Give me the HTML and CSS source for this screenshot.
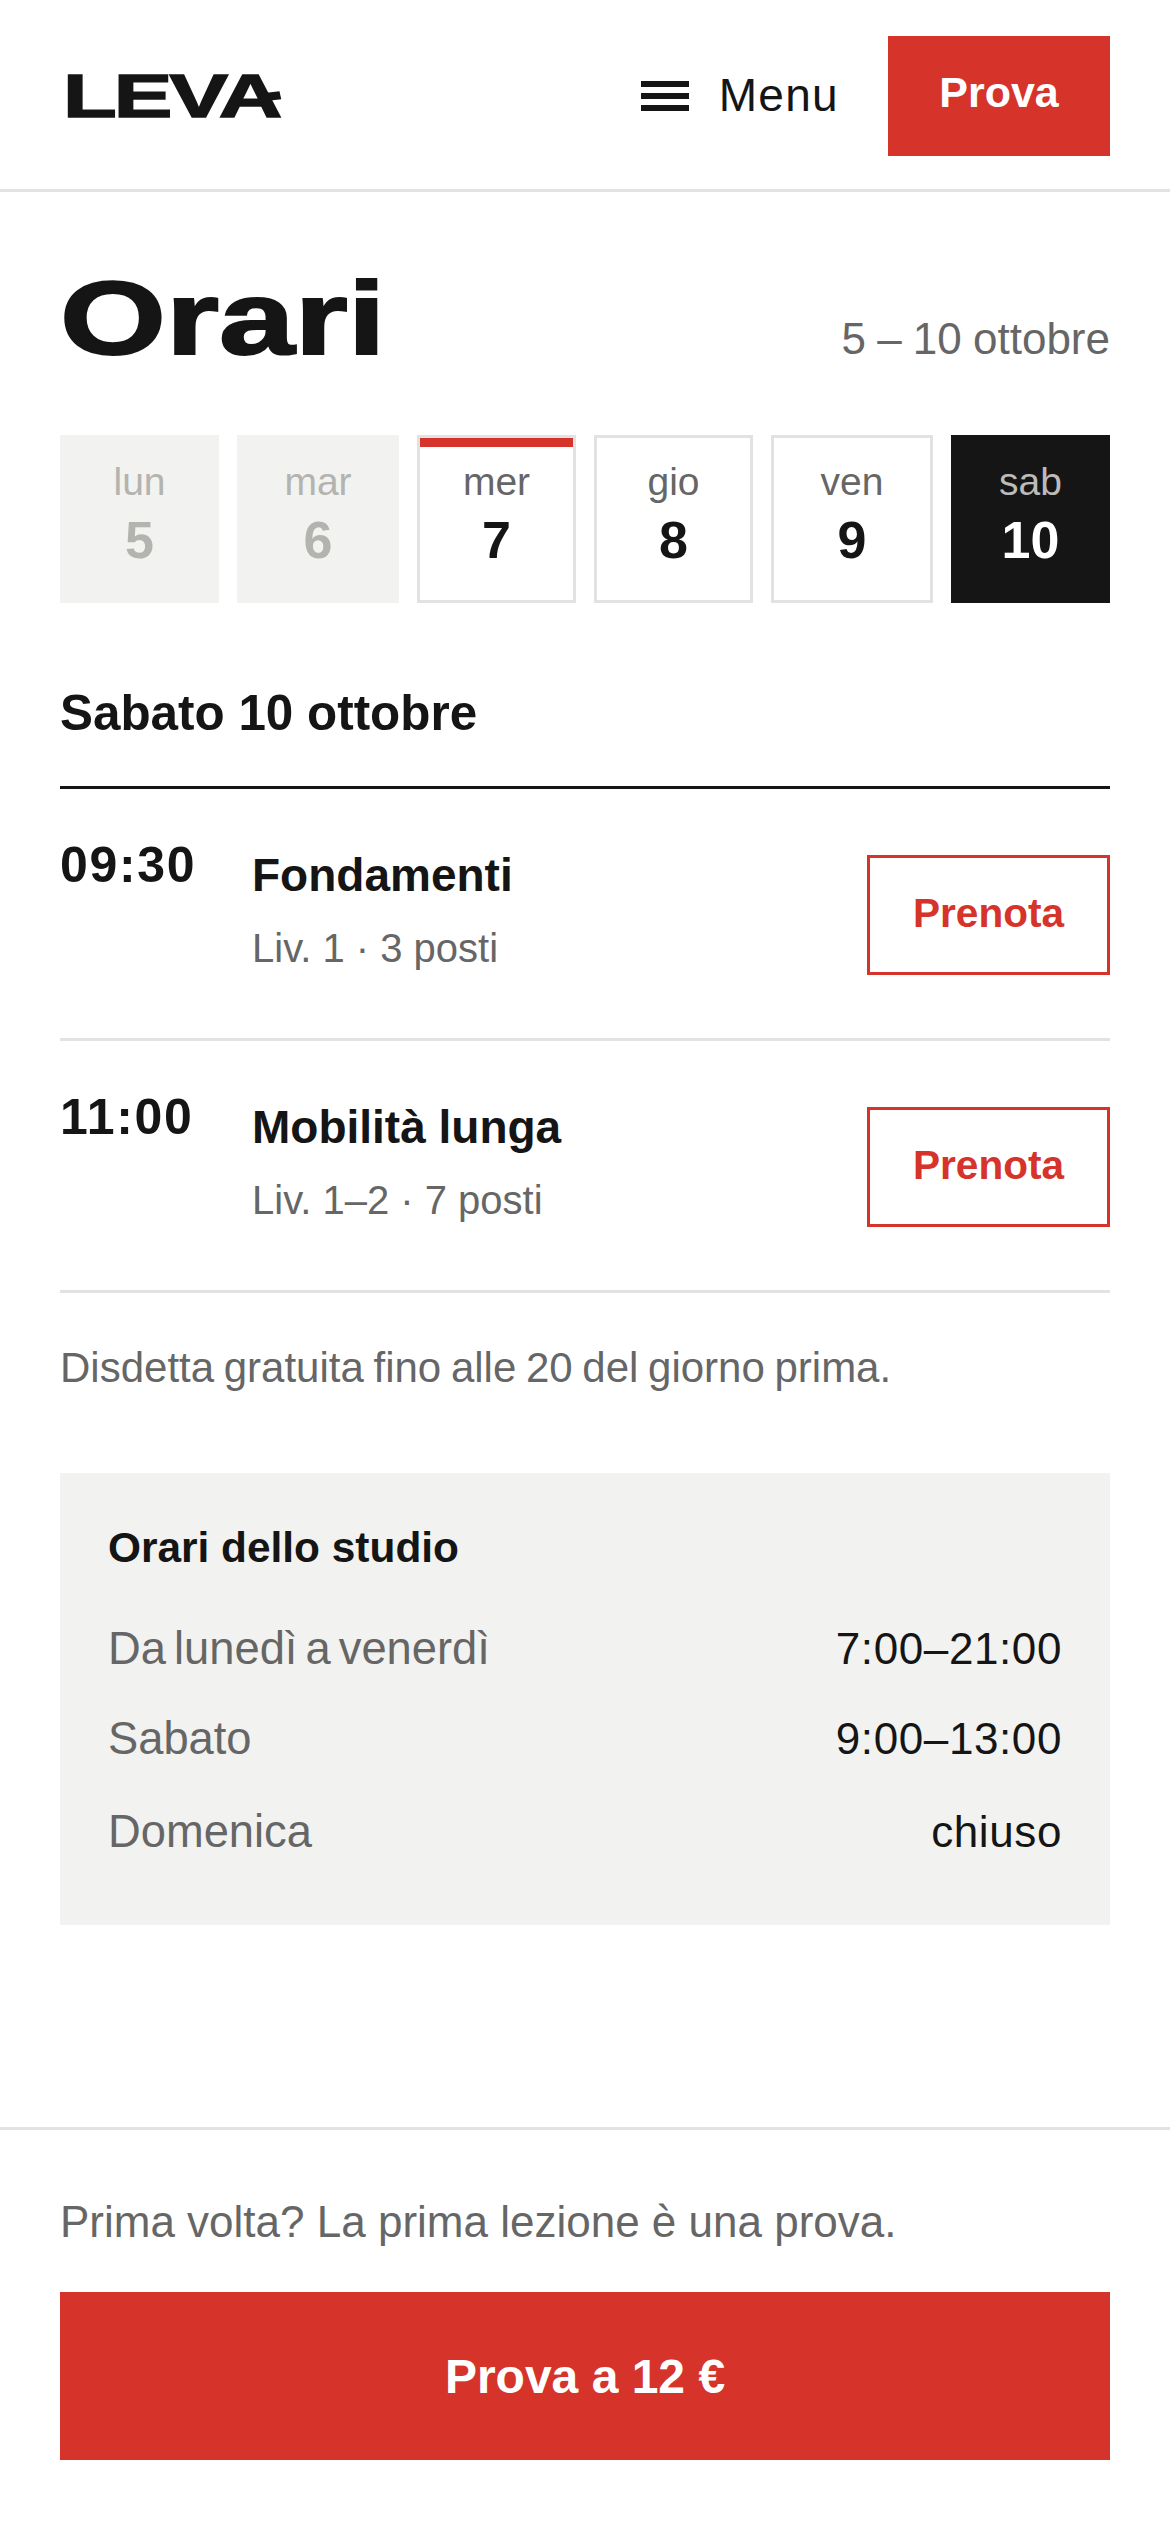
FILE: index.html
```html
<!DOCTYPE html>
<html>
<head>
    <title>Orari</title>
    <link rel="stylesheet" href="styles.css">
</head>
<body>
    <header class="topbar">
        <div class="logo">LEVA</div>
        <div class="menu">
            <svg class="menu-icon" width="48" height="30" viewBox="0 0 48 30">
                <rect x="0" y="0" width="48" height="6" fill="#151515"/>
                <rect x="0" y="12" width="48" height="6" fill="#151515"/>
                <rect x="0" y="24" width="48" height="6" fill="#151515"/>
            </svg>
            <span class="menu-label">Menu</span>
        </div>
        <div class="top-cta">Prova</div>
    </header>

    <main class="content">
        <div class="title-row">
            <h1>Orari</h1>
            <div class="range">5 – 10 ottobre</div>
        </div>

        <div class="days">
            <div class="day past"><span class="name">lun</span><span class="num">5</span></div>
            <div class="day past"><span class="name">mar</span><span class="num">6</span></div>
            <div class="day today"><span class="name">mer</span><span class="num">7</span></div>
            <div class="day"><span class="name">gio</span><span class="num">8</span></div>
            <div class="day"><span class="name">ven</span><span class="num">9</span></div>
            <div class="day selected"><span class="name">sab</span><span class="num">10</span></div>
        </div>

        <h2>Sabato 10 ottobre</h2>

        <div class="lesson">
            <div class="time">09:30</div>
            <div class="info">
                <div class="lesson-name">Fondamenti</div>
                <div class="lesson-meta">Liv. 1 · 3 posti</div>
            </div>
            <div class="book">Prenota</div>
        </div>
        <div class="lesson">
            <div class="time">11:00</div>
            <div class="info">
                <div class="lesson-name">Mobilità lunga</div>
                <div class="lesson-meta">Liv. 1–2 · 7 posti</div>
            </div>
            <div class="book">Prenota</div>
        </div>

        <p class="note">Disdetta gratuita fino alle 20 del giorno prima.</p>

        <section class="hours">
            <h3>Orari dello studio</h3>
            <div class="hours-row"><span>Da lunedì a venerdì</span><span class="val">7:00–21:00</span></div>
            <div class="hours-row"><span>Sabato</span><span class="val">9:00–13:00</span></div>
            <div class="hours-row"><span>Domenica</span><span class="val">chiuso</span></div>
        </section>
    </main>

    <footer class="bottom">
        <p>Prima volta? La prima lezione è una prova.</p>
        <div class="bottom-cta">Prova a 12 €</div>
    </footer>
</body>
</html>
```

FILE: styles.css
```css
* {
    box-sizing: border-box;
}
html, body {
    margin: 0;
    padding: 0;
}
body {
    width: 1170px;
    height: 2532px;
    background: #fff;
    color: #151515;
    font-family: "Liberation Sans", Arial, sans-serif;
    display: flex;
    flex-direction: column;
}

/* top bar */
.topbar {
    height: 192px;
    padding: 36px 60px 33px;
    border-bottom: 3px solid #e2e2e0;
    display: flex;
    align-items: center;
}
.logo {
    position: relative;
    margin-left: 3px;
    font-size: 61px;
    font-weight: bold;
    line-height: 61px;
    width: 155px;
    transform: scaleX(1.44);
    transform-origin: left center;
    letter-spacing: -2px;
    -webkit-text-stroke: 1.5px #151515;
}
/* the small stroke that cuts through the A */
.logo::after {
    content: "";
    position: absolute;
    left: 142px;
    top: 26px;
    width: 9px;
    height: 8px;
    background: #151515;
    transform: rotate(-9deg);
}
.menu {
    margin-left: auto;
    display: flex;
    align-items: center;
    gap: 30px;
    font-size: 46px;
    letter-spacing: 1.3px;
}
.menu-label {
    padding-bottom: 3px;
}
.top-cta {
    margin-left: 49px;
    width: 222px;
    height: 120px;
    background: #d6332a;
    color: #fff;
    font-size: 43px;
    font-weight: bold;
    display: flex;
    align-items: center;
    justify-content: center;
    padding-bottom: 8px;
}

.content {
    flex: 1;
    padding: 0 60px;
}
.title-row {
    display: flex;
    justify-content: space-between;
    align-items: baseline;
    height: 243px;
    padding-top: 74px;
}
h1 {
    margin: 0;
    font-size: 104px;
    line-height: 104px;
    font-weight: bold;
    transform: scaleX(1.31);
    transform-origin: left bottom;
    -webkit-text-stroke: 2px #151515;
}
.range {
    font-size: 44px;
    word-spacing: -1px;
    color: #666;
}

/* week strip */
.days {
    display: grid;
    grid-template-columns: 159px 162px 159px 159px 162px 159px;
    gap: 18px;
}
.day {
    height: 168px;
    border: 3px solid #e2e2e0;
    display: flex;
    flex-direction: column;
    align-items: center;
    padding-top: 19px;
}
.day .name {
    font-size: 39px;
    line-height: 50px;
    color: #666;
}
.day .num {
    font-size: 52px;
    line-height: 66px;
    font-weight: bold;
}
.day.past {
    background: #f2f2f0;
    border-color: #f2f2f0;
}
.day.past .name,
.day.past .num {
    color: #b3b3af;
}
.day.today {
    position: relative;
}
.day.today::before {
    content: "";
    position: absolute;
    top: 0;
    left: 0;
    right: 0;
    height: 9px;
    background: #d6332a;
}
.day.selected {
    background: #151515;
    border-color: #151515;
    color: #fff;
}
.day.selected .name {
    color: #bbb;
}

h2 {
    margin: 0;
    height: 186px;
    padding-top: 80px;
    border-bottom: 3px solid #151515;
    font-size: 49.4px;
    line-height: 60px;
}

/* lessons */
.lesson {
    height: 252px;
    border-bottom: 3px solid #e2e2e0;
    display: flex;
    align-items: flex-start;
    padding-top: 46px;
}
.time {
    width: 192px;
    font-size: 50px;
    line-height: 60px;
    font-weight: bold;
    letter-spacing: 1.7px;
}
.info {
    flex: 1;
    padding-top: 10px;
}
.lesson-name {
    font-size: 46px;
    line-height: 60px;
    font-weight: bold;
}
.lesson-meta {
    margin-top: 18px;
    font-size: 40px;
    line-height: 50px;
    color: #666;
}
.book {
    width: 243px;
    height: 120px;
    margin-top: 20px;
    border: 3px solid #d6332a;
    color: #d6332a;
    font-size: 40.6px;
    font-weight: bold;
    display: flex;
    align-items: center;
    justify-content: center;
    padding-bottom: 4px;
}

.note {
    margin: 0;
    padding-top: 50px;
    font-size: 42px;
    line-height: 50px;
    word-spacing: -2px;
    color: #666;
}

/* studio hours */
.hours {
    margin-top: 80px;
    height: 452px;
    background: #f2f2f0;
    padding: 48px 48px 0;
}
.hours h3 {
    margin: 0 0 29px;
    font-size: 42.4px;
    line-height: 54px;
}
.hours-row {
    display: flex;
    justify-content: space-between;
    font-size: 45.3px;
    line-height: 90px;
    word-spacing: -4.5px;
    color: #666;
}
.hours-row:last-child {
    margin-top: 3px;
}
.hours-row .val {
    font-size: 44px;
    letter-spacing: 0.6px;
    color: #151515;
}

/* sticky offer */
.bottom {
    height: 405px;
    border-top: 3px solid #e2e2e0;
    padding: 62px 60px 0;
}
.bottom p {
    margin: 0 0 40px;
    font-size: 44px;
    line-height: 60px;
    color: #666;
}
.bottom-cta {
    height: 168px;
    background: #d6332a;
    color: #fff;
    font-size: 48px;
    font-weight: bold;
    display: flex;
    align-items: center;
    justify-content: center;
}
```
